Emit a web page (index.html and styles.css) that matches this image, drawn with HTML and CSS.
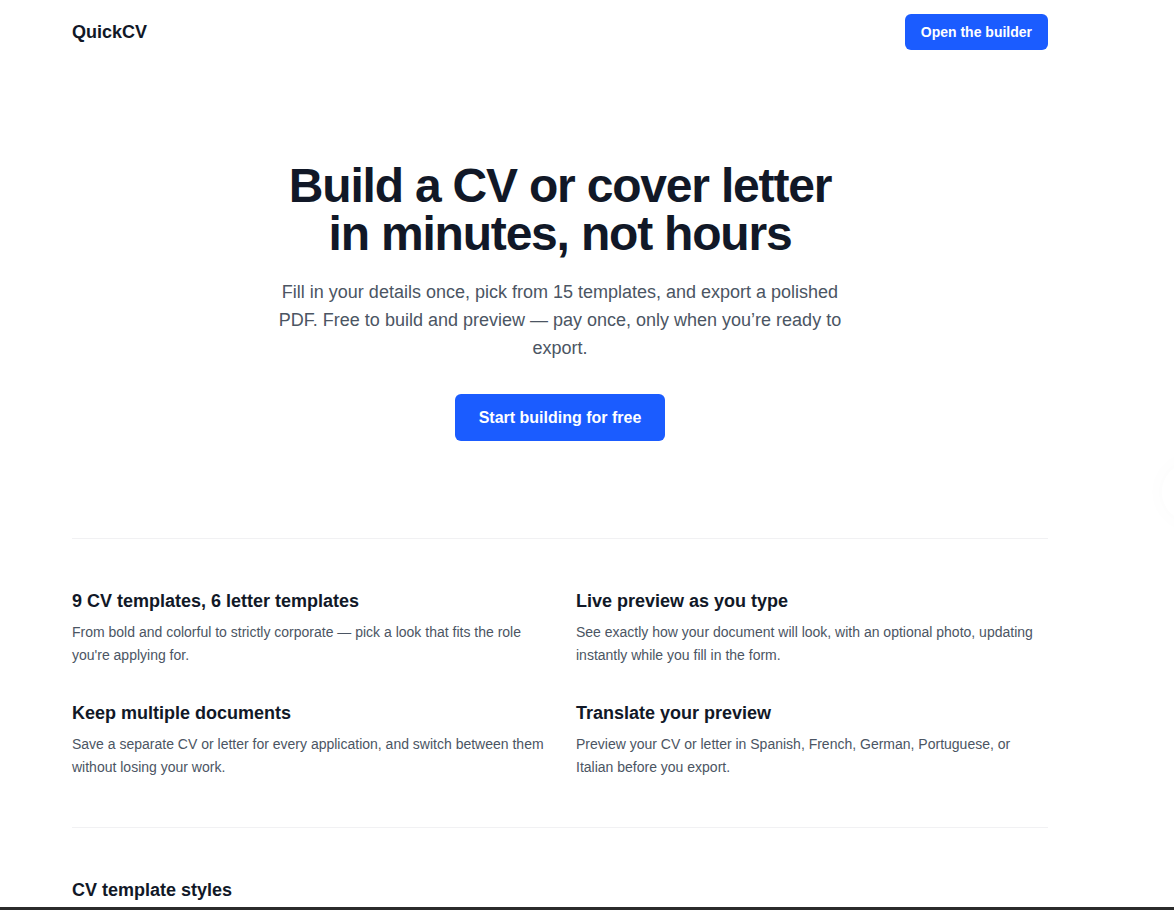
FILE: index.html
```html
<!DOCTYPE html>
<html lang="en">
<head>
    <meta charset="UTF-8">
    <meta name="viewport" content="width=device-width, initial-scale=1.0">
    <title>QuickCV - Build a CV or cover letter</title>
    <link rel="stylesheet" href="styles.css">
</head>
<body>
    <div class="page">
        <header class="topbar">
            <a class="logo" href="/">QuickCV</a>
            <a class="btn btn-small" href="/builder">Open the builder</a>
        </header>

        <section class="hero">
            <h1>Build a CV or cover letter<br>in minutes, not hours</h1>
            <p>Fill in your details once, pick from 15 templates, and export a polished PDF. Free to build and preview — pay once, only when you’re ready to export.</p>
            <a class="btn btn-large" href="/builder">Start building for free</a>
        </section>

        <section class="features">
            <div class="feature">
                <h3>9 CV templates, 6 letter templates</h3>
                <p>From bold and colorful to strictly corporate — pick a look that fits the role you're applying for.</p>
            </div>
            <div class="feature">
                <h3>Live preview as you type</h3>
                <p>See exactly how your document will look, with an optional photo, updating instantly while you fill in the form.</p>
            </div>
            <div class="feature">
                <h3>Keep multiple documents</h3>
                <p>Save a separate CV or letter for every application, and switch between them without losing your work.</p>
            </div>
            <div class="feature">
                <h3>Translate your preview</h3>
                <p>Preview your CV or letter in Spanish, French, German, Portuguese, or Italian before you export.</p>
            </div>
        </section>

        <section class="templates">
            <h2>CV template styles</h2>
        </section>
    </div>

    <div class="help-bubble"></div>
    <div class="bottom-edge"></div>
</body>
</html>
```

FILE: styles.css
```css
body {
    margin: 0;
    padding: 0;
    background-color: #ffffff;
    color: #111827;
    font-family: 'Liberation Sans', Arial, sans-serif;
}
a {
    text-decoration: none;
}
.page {
    max-width: 976px;
    padding: 0 72px;
}
.topbar {
    display: flex;
    justify-content: space-between;
    align-items: center;
    padding: 14px 0;
}
.logo {
    font-size: 18px;
    font-weight: 700;
    color: #111827;
}
.btn {
    display: inline-block;
    background-color: #1b5cff;
    color: #ffffff;
    font-weight: 700;
    border-radius: 6px;
}
.btn-small {
    font-size: 14px;
    line-height: 18px;
    padding: 9px 16px;
}
.btn-large {
    font-size: 16px;
    line-height: 19px;
    padding: 14px 24px;
}
.hero {
    text-align: center;
    padding: 98px 0 97px;
    border-bottom: 1px solid #f1f1f3;
}
.hero h1 {
    font-size: 48px;
    line-height: 48px;
    letter-spacing: -0.025em;
    margin: 0 0 20px;
    color: #111827;
}
.hero p {
    max-width: 580px;
    margin: 0 auto 32px;
    font-size: 18px;
    line-height: 28px;
    color: #4b5563;
}
.features {
    display: grid;
    grid-template-columns: 1fr 1fr;
    column-gap: 32px;
    row-gap: 32px;
    padding: 48px 0;
    border-bottom: 1px solid #f1f1f3;
}
.feature h3 {
    font-size: 18px;
    line-height: 28px;
    margin: 0 0 6px;
}
.feature p {
    font-size: 14px;
    line-height: 23px;
    margin: 0;
    color: #4b5563;
}
.templates {
    padding: 48px 0;
}
.templates h2 {
    font-size: 18px;
    line-height: 28px;
    margin: 0;
}
/* floating help button, mostly tucked off the right edge */
.help-bubble {
    position: fixed;
    right: -48px;
    top: 462px;
    width: 60px;
    height: 60px;
    border-radius: 50%;
    background: #ffffff;
    box-shadow: 0 0 24px rgba(0, 0, 0, 0.025);
}
.bottom-edge {
    position: fixed;
    left: 0;
    right: 0;
    bottom: 0;
    height: 3px;
    background: #2b2b2b;
}
```
